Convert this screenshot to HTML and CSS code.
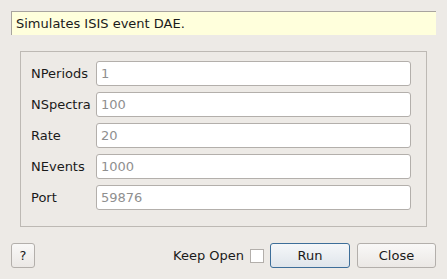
FILE: index.html
```html
<!DOCTYPE html>
<html lang="en">
<head>
    <meta charset="UTF-8">
    <title>Simulates ISIS event DAE</title>
    <link rel="stylesheet" href="styles.css">
</head>
<body>
    <div class="dialog">
        <div class="description">Simulates ISIS event DAE.</div>

        <div class="group">
            <label for="nperiods">NPeriods</label>
            <input type="text" id="nperiods" placeholder="1">

            <label for="nspectra">NSpectra</label>
            <input type="text" id="nspectra" placeholder="100">

            <label for="rate">Rate</label>
            <input type="text" id="rate" placeholder="20">

            <label for="nevents">NEvents</label>
            <input type="text" id="nevents" placeholder="1000">

            <label for="port">Port</label>
            <input type="text" id="port" placeholder="59876">
        </div>

        <div class="buttons">
            <button class="help">?</button>
            <span class="spacer"></span>
            <label class="keep-open" for="keep">Keep Open</label>
            <input type="checkbox" id="keep" class="check">
            <button class="run">Run</button>
            <button class="close">Close</button>
        </div>
    </div>
</body>
</html>
```

FILE: styles.css
```css
body {
    margin: 0;
    background-color: #edeae6;
    font-family: "DejaVu Sans", sans-serif;
    font-size: 13px;
    color: #1a1a1a;
}

.dialog {
    padding: 11px 11px 0 11px;
}

.description {
    height: 24px;
    line-height: 23px;
    padding-left: 4px;
    background-color: #ffffdc;
    border-top: 1px solid #a8a49f;
    border-left: 1px solid #a8a49f;
    box-sizing: border-box;
}

.group {
    margin: 16px 9px 0 9px;
    padding: 9px 15px 16px 10px;
    border: 1px solid #bdb9b4;
    display: grid;
    grid-template-columns: 65px 1fr;
    row-gap: 6px;
    align-items: center;
}

.group label {
    white-space: nowrap;
}

.group input {
    height: 25px;
    box-sizing: border-box;
    border: 1px solid #b3afab;
    border-radius: 3px;
    background: #fff;
    font-family: "DejaVu Sans", sans-serif;
    font-size: 13px;
    padding: 0 4px;
    outline: none;
}

.group input::placeholder {
    color: #8f8f8f;
}

.buttons {
    display: flex;
    align-items: center;
    margin-top: 16px;
}

.spacer {
    flex: 1;
}

button {
    height: 25px;
    box-sizing: border-box;
    border: 1px solid #b3afab;
    border-radius: 3px;
    background: linear-gradient(#f9f8f7, #ebe8e5);
    font-family: "DejaVu Sans", sans-serif;
    font-size: 13px;
    color: #1a1a1a;
    padding: 0;
}

.help {
    width: 24px;
}

.keep-open {
    margin-right: 6px;
}

.check {
    appearance: none;
    width: 14px;
    height: 14px;
    margin: 0 6px 0 0;
    border: 1px solid #b3afab;
    background: #fff;
    box-sizing: border-box;
}

.run {
    width: 80px;
    border-color: #3d6e99;
    background: linear-gradient(#f5f7f9, #dfe5eb);
}

.close {
    width: 79px;
    margin-left: 7px;
}
```
